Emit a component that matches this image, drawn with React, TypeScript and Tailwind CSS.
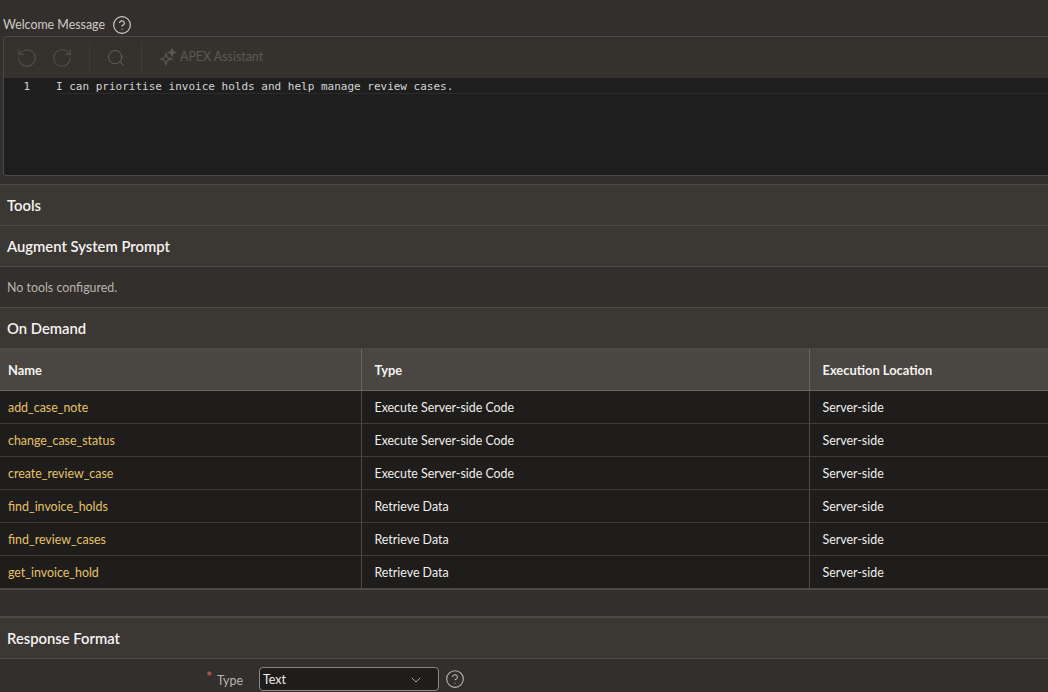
import { ChevronDown, CircleHelp, RotateCcw, RotateCw, Search } from "lucide-react";

const tools = [
  { name: "add_case_note", type: "Execute Server-side Code" },
  { name: "change_case_status", type: "Execute Server-side Code" },
  { name: "create_review_case", type: "Execute Server-side Code" },
  { name: "find_invoice_holds", type: "Retrieve Data" },
  { name: "find_review_cases", type: "Retrieve Data" },
  { name: "get_invoice_hold", type: "Retrieve Data" },
];

function SectionHeader({ title }: { title: string }) {
  return (
    <div className="flex h-[41px] items-center border-b border-[#4d4945] bg-[#3b3833] px-[7px] pt-[1px] text-[14.8px] font-semibold text-[#f4f2f0]">
      {title}
    </div>
  );
}

// APEX Assistant sparkle
function Sparkle() {
  return (
    <svg width="18" height="18" viewBox="0 0 18 18" fill="none" stroke="#5c5854" strokeWidth="1.2">
      <path d="M7 5.5 L8.4 9.6 L12.5 11 L8.4 12.4 L7 16.5 L5.6 12.4 L1.5 11 L5.6 9.6 Z" />
      <path d="M13 1 L14 3.5 L16.5 4.5 L14 5.5 L13 8 L12 5.5 L9.5 4.5 L12 3.5 Z" fill="#5c5854" />
    </svg>
  );
}

export default function App() {
  return (
    <div className="h-[692px] w-[1048px] overflow-hidden bg-[#332f2c] font-['Lato','Noto_Sans',sans-serif] text-[12.4px] text-[#f0eeec]">
      <div className="flex h-[36px] items-end gap-[7px] pb-[1px] pl-[3px]">
        <span className="leading-[20px] text-[#cfcbc7]">Welcome Message</span>
        <CircleHelp size={20} strokeWidth={1.4} className="text-[#cfcbc7]" />
      </div>

      <div className="mb-[8px] ml-[3px] h-[140px] overflow-hidden rounded-tl-[4px] rounded-bl-[4px] border border-r-0 border-[#4d4945]">
        <div className="flex h-[41px] items-center bg-[#35322e] text-[#55514d]">
          <div className="flex w-[85px] items-center gap-[13px] pl-[12px]">
            <RotateCcw size={22} strokeWidth={1.1} />
            <RotateCw size={22} strokeWidth={1.1} />
          </div>
          <div className="flex h-[30px] w-[53px] items-center justify-center border-x border-[#3f3c38]">
            <Search size={20} strokeWidth={1.2} className="text-[#65615d]" />
          </div>
          <div className="flex items-center gap-[3px] pl-[17px] text-[#5c5854]">
            <Sparkle />
            <span>APEX Assistant</span>
          </div>
        </div>
        <div className="h-[97px] bg-[#1e1e1e] font-['DejaVu_Sans_Mono','Liberation_Mono',monospace] text-[11px] leading-[16px] text-[#d4d4d4]">
          <div className="flex pt-[1px]">
            <span className="w-[26px] text-right">1</span>
            <span className="ml-[26px] h-[15px] flex-1 border-b border-[#2b2b2b] whitespace-pre">
              I can prioritise invoice holds and help manage review cases.
            </span>
          </div>
        </div>
      </div>

      <div className="border-t border-[#4d4945]">
        <SectionHeader title="Tools" />
        <SectionHeader title="Augment System Prompt" />
        <div className="flex h-[41px] items-center border-b border-[#4d4945] px-[7px] pt-[2px] text-[#b8b4b0]">
          No tools configured.
        </div>
        <SectionHeader title="On Demand" />
      </div>

      <table className="w-full table-fixed border-collapse border-b-2 border-[#4d4945]">
        <thead>
          <tr className="h-[41px] border-b border-[#6a6661] bg-[#4a4641] text-left text-[12.9px] font-bold text-[#f4f2f0]">
            <th className="w-[361px] border-r border-[#6a6661] pl-[8px] pt-[2px]">Name</th>
            <th className="w-[448px] border-r border-[#6a6661] pl-[13px] pt-[2px]">Type</th>
            <th className="pl-[13px] pt-[2px]">Execution Location</th>
          </tr>
        </thead>
        <tbody>
          {tools.map((tool) => (
            <tr key={tool.name} className="h-[33px] border-b border-[#3d3a37] bg-[#1f1d1b] last:h-[34px] last:border-b-0">
              <td className="border-r border-[#4d4945] pl-[8px] pt-[3px] text-[#e6c26a]">{tool.name}</td>
              <td className="border-r border-[#4d4945] pl-[13px] pt-[3px]">{tool.type}</td>
              <td className="pl-[13px] pt-[3px]">Server-side</td>
            </tr>
          ))}
        </tbody>
      </table>

      <div className="h-[26px]" />
      <div className="border-t-2 border-[#4d4945]">
        <SectionHeader title="Response Format" />
      </div>

      <div className="flex items-start pt-[8px]">
        <div className="flex w-[251px] justify-end pr-[8px] pt-[5px] text-[#b8b4b0]">
          <span className="relative text-[#b8b4b0]">
            <span className="absolute -left-[11px] -top-[7px] text-[15px] text-[#e0685e]">*</span>
            Type
          </span>
        </div>
        <div className="ml-[8px] flex h-[24px] w-[180px] items-center justify-between rounded-[4px] border border-[#8a8682] bg-[#1f1d1b] pl-[3px] pr-[14px] pt-[2px] text-[#f0eeec]">
          <span>Text</span>
          <ChevronDown size={16} strokeWidth={1.3} className="text-[#b8b4b0]" />
        </div>
        <CircleHelp size={20} strokeWidth={1.3} className="ml-[6px] mt-[2px] text-[#b8b4b0]" />
      </div>
    </div>
  );
}
